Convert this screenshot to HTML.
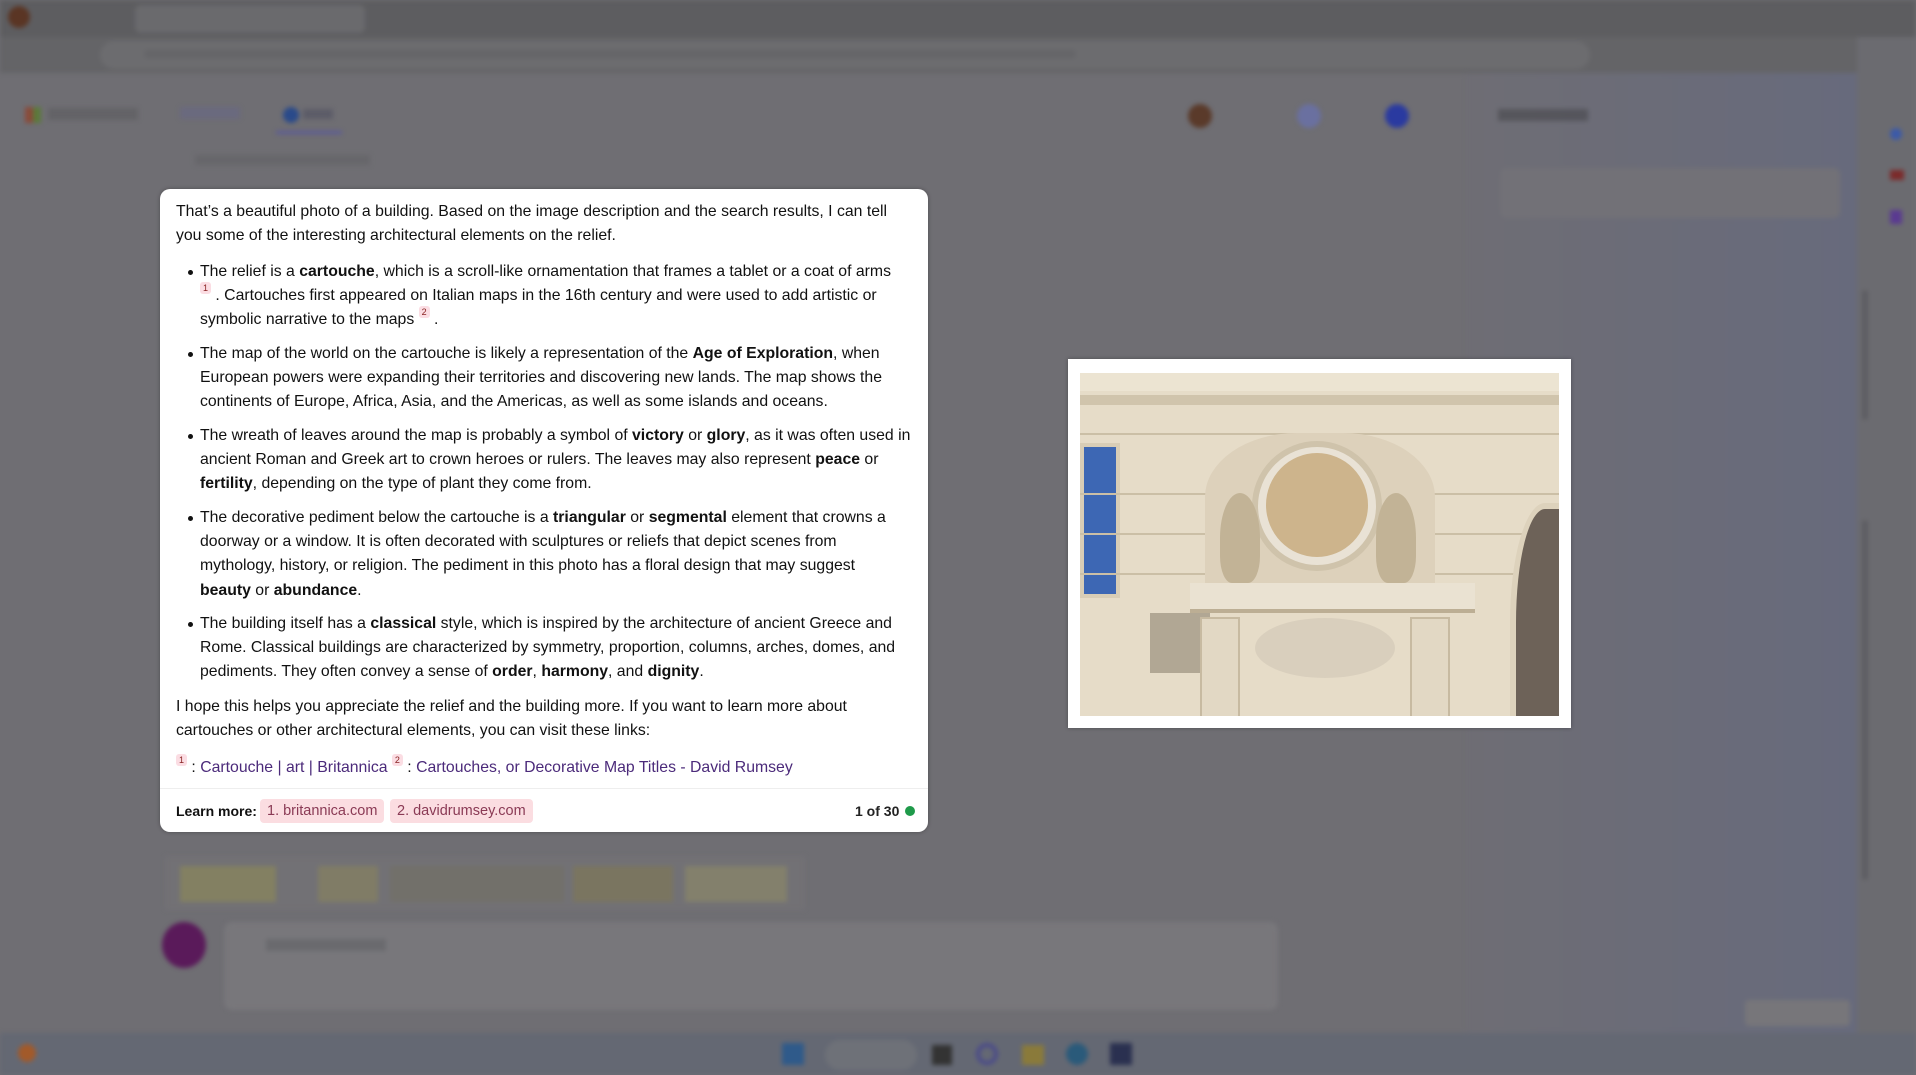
<!DOCTYPE html>
<html><head><meta charset="utf-8"><style>
*{margin:0;padding:0;box-sizing:border-box}
html,body{width:1916px;height:1075px;overflow:hidden;background:#6f6e73;font-family:"Liberation Sans",Arial,sans-serif}
.bg{position:absolute;inset:0;filter:blur(2.5px)}
.abs{position:absolute}
.card{position:absolute;left:160px;top:189px;width:768px;height:643px;background:#fff;border-radius:10px;box-shadow:0 0 4px rgba(0,0,0,.3);color:#111;font-size:15.8px;line-height:24.2px}
.card p{position:absolute;left:16px;white-space:nowrap}
.card .li{left:40px}
.card .dot{position:absolute;left:-12px;top:10px;width:5px;height:5px;border-radius:50%;background:#111}
b{font-weight:bold}
sup{display:inline-block;font-size:9px;line-height:12px;background:#fbdde3;color:#822;padding:0 3px;border-radius:3px;vertical-align:top;margin-top:-2px}
.lnk{color:#4b2a7a}
.pill{position:absolute;top:610px;height:24px;line-height:24px;background:#fbdde1;color:#8a3a55;border-radius:4px;padding:0 7px;font-size:14.5px}
</style></head><body>
<div class="bg">
 <div class="abs" style="left:0;top:0;width:1916px;height:37px;background:#5d5d60"></div>
 <div class="abs" style="left:135px;top:5px;width:230px;height:28px;background:#6a6a6d;border-radius:6px"></div>
 <div class="abs" style="left:8px;top:6px;width:22px;height:22px;border-radius:50%;background:#5a3524"></div>
 <div class="abs" style="left:0;top:37px;width:1916px;height:36px;background:#646467"></div>
 <div class="abs" style="left:100px;top:41px;width:1490px;height:28px;background:#6c6c6f;border-radius:14px"></div>
 <div class="abs" style="left:145px;top:50px;width:930px;height:8px;background:#5e5e62;opacity:.5"></div>
 <div class="abs" style="left:1466px;top:73px;width:391px;height:960px;background:linear-gradient(90deg,#6e6d74,#676a7c)"></div>
 <div class="abs" style="left:1857px;top:37px;width:59px;height:996px;background:#6b6b70"></div>
 <div class="abs" style="left:1890px;top:128px;width:12px;height:12px;border-radius:50%;background:#3c5aa8"></div>
 <div class="abs" style="left:1890px;top:170px;width:14px;height:10px;background:#7b2a2a"></div>
 <div class="abs" style="left:1890px;top:210px;width:12px;height:14px;background:#5a3a90"></div>
 <div class="abs" style="left:1862px;top:290px;width:6px;height:130px;background:#5d5d62;border-radius:3px"></div>
 <div class="abs" style="left:1862px;top:520px;width:6px;height:360px;background:#5d5d62;border-radius:3px"></div>
 <div class="abs" style="left:25px;top:107px;width:16px;height:16px;background:linear-gradient(90deg,#8a4a3a 50%,#5b7a3a 50%)"></div>
 <div class="abs" style="left:48px;top:108px;width:90px;height:12px;background:#5b5b5f;opacity:.6"></div>
 <div class="abs" style="left:180px;top:107px;width:60px;height:12px;background:#66668a;opacity:.5"></div>
 <div class="abs" style="left:283px;top:107px;width:16px;height:16px;border-radius:50%;background:#2a4a8a"></div>
 <div class="abs" style="left:303px;top:109px;width:30px;height:10px;background:#5c5c68"></div>
 <div class="abs" style="left:276px;top:131px;width:66px;height:3px;background:#5a5a9a"></div>
 <div class="abs" style="left:195px;top:155px;width:175px;height:10px;background:#626266;opacity:.6"></div>
 <div class="abs" style="left:1188px;top:104px;width:24px;height:24px;border-radius:50%;background:#5a3a2a"></div>
 <div class="abs" style="left:1297px;top:104px;width:24px;height:24px;border-radius:50%;background:#6a70a0"></div>
 <div class="abs" style="left:1385px;top:104px;width:24px;height:24px;border-radius:50%;background:#2a3aa0"></div>
 <div class="abs" style="left:1498px;top:109px;width:90px;height:12px;background:#505056;opacity:.8"></div>
 <div class="abs" style="left:1500px;top:168px;width:340px;height:50px;background:#727177;border-radius:6px"></div>
 <div class="abs" style="left:165px;top:856px;width:640px;height:54px;background:#727175"></div>
 <div class="abs" style="left:180px;top:866px;width:96px;height:36px;background:#838062"></div>
 <div class="abs" style="left:318px;top:866px;width:60px;height:36px;background:#807c66"></div>
 <div class="abs" style="left:390px;top:866px;width:174px;height:36px;background:#72706a"></div>
 <div class="abs" style="left:573px;top:866px;width:100px;height:36px;background:#7a7560"></div>
 <div class="abs" style="left:685px;top:866px;width:102px;height:36px;background:#83806c"></div>
 <div class="abs" style="left:162px;top:922px;width:44px;height:46px;border-radius:50%;background:#5a1a5a"></div>
 <div class="abs" style="left:224px;top:922px;width:1054px;height:88px;background:#78777b;border-radius:8px"></div>
 <div class="abs" style="left:266px;top:939px;width:120px;height:12px;background:#6a6a6e"></div>
 <div class="abs" style="left:1745px;top:1000px;width:105px;height:26px;background:#77767a;border-radius:4px"></div>
 <div class="abs" style="left:0;top:1033px;width:1916px;height:42px;background:#646873"></div>
 <div class="abs" style="left:18px;top:1044px;width:18px;height:18px;border-radius:50%;background:#a25a2a"></div>
 <div class="abs" style="left:782px;top:1043px;width:22px;height:22px;background:#2f5a8a"></div>
 <div class="abs" style="left:825px;top:1040px;width:92px;height:30px;background:#6e7178;border-radius:15px"></div>
 <div class="abs" style="left:932px;top:1045px;width:20px;height:20px;background:#333"></div>
 <div class="abs" style="left:976px;top:1043px;width:22px;height:22px;border-radius:50%;border:4px solid #4a4a8a"></div>
 <div class="abs" style="left:1022px;top:1045px;width:22px;height:20px;background:#8a7a3a"></div>
 <div class="abs" style="left:1066px;top:1043px;width:22px;height:22px;border-radius:50%;background:#2a5a7a"></div>
 <div class="abs" style="left:1110px;top:1043px;width:22px;height:22px;background:#2a3050"></div>
</div>

<div class="card">
 <p style="top:11px">That’s a beautiful photo of a building. Based on the image description and the search results, I can tell<br>you some of the interesting architectural elements on the relief.</p>
 <p class="li" style="top:71px"><span class="dot"></span>The relief is a <b>cartouche</b>, which is a scroll-like ornamentation that frames a tablet or a coat of arms<br><sup>1</sup> . Cartouches first appeared on Italian maps in the 16th century and were used to add artistic or<br>symbolic narrative to the maps <sup>2</sup> .</p>
 <p class="li" style="top:153px"><span class="dot"></span>The map of the world on the cartouche is likely a representation of the <b>Age of Exploration</b>, when<br>European powers were expanding their territories and discovering new lands. The map shows the<br>continents of Europe, Africa, Asia, and the Americas, as well as some islands and oceans.</p>
 <p class="li" style="top:235px"><span class="dot"></span>The wreath of leaves around the map is probably a symbol of <b>victory</b> or <b>glory</b>, as it was often used in<br>ancient Roman and Greek art to crown heroes or rulers. The leaves may also represent <b>peace</b> or<br><b>fertility</b>, depending on the type of plant they come from.</p>
 <p class="li" style="top:317px"><span class="dot"></span>The decorative pediment below the cartouche is a <b>triangular</b> or <b>segmental</b> element that crowns a<br>doorway or a window. It is often decorated with sculptures or reliefs that depict scenes from<br>mythology, history, or religion. The pediment in this photo has a floral design that may suggest<br><b>beauty</b> or <b>abundance</b>.</p>
 <p class="li" style="top:423px"><span class="dot"></span>The building itself has a <b>classical</b> style, which is inspired by the architecture of ancient Greece and<br>Rome. Classical buildings are characterized by symmetry, proportion, columns, arches, domes, and<br>pediments. They often convey a sense of <b>order</b>, <b>harmony</b>, and <b>dignity</b>.</p>
 <p style="top:506px">I hope this helps you appreciate the relief and the building more. If you want to learn more about<br>cartouches or other architectural elements, you can visit these links:</p>
 <p style="top:567px"><sup>1</sup> : <span class="lnk">Cartouche | art | Britannica</span> <sup>2</sup> : <span class="lnk">Cartouches, or Decorative Map Titles - David Rumsey</span></p>
 <div class="abs" style="left:0;top:599px;width:768px;height:1px;background:#eee"></div>
 <p style="top:610px;font-weight:bold;font-size:14px">Learn more:</p>
 <div class="pill" style="left:100px">1. britannica.com</div>
 <div class="pill" style="left:230px">2. davidrumsey.com</div>
 <p style="top:610px;left:695px;font-size:14px;font-weight:bold;color:#222">1 of 30</p>
 <div class="abs" style="left:745px;top:617px;width:10px;height:10px;border-radius:50%;background:#1f9a4a"></div>
</div>

<div class="abs" style="left:1068px;top:359px;width:503px;height:369px;background:#fff;box-shadow:0 0 4px rgba(0,0,0,.3)">
 <div class="abs" style="left:12px;top:14px;width:479px;height:343px;background:#e6dcc8;overflow:hidden">
  <div class="abs" style="left:0;top:0;width:479px;height:18px;background:#ece4d2"></div>
  <div class="abs" style="left:0;top:22px;width:479px;height:10px;background:#d0c4ac"></div>
  <div class="abs" style="left:0;top:60px;width:479px;height:2px;background:#cbbfa6"></div>
  <div class="abs" style="left:0;top:70px;width:40px;height:155px;background:#3d67b4;border:4px solid #d8cdb6"></div>
  <div class="abs" style="left:0;top:120px;width:479px;height:2px;background:#cbbfa6"></div>
  <div class="abs" style="left:0;top:160px;width:479px;height:2px;background:#cbbfa6"></div>
  <div class="abs" style="left:0;top:200px;width:479px;height:2px;background:#cbbfa6"></div>
  <div class="abs" style="left:125px;top:60px;width:230px;height:160px;background:#ddd1bb;border-radius:40% 40% 0 0"></div>
  <div class="abs" style="left:172px;top:68px;width:130px;height:130px;border-radius:50%;background:#e9e2d5;border:6px solid #cfc3ab"></div>
  <div class="abs" style="left:186px;top:80px;width:102px;height:104px;border-radius:50%;background:#cdb48c"></div>
  <div class="abs" style="left:140px;top:120px;width:40px;height:90px;background:#c2b396;border-radius:50% 50% 30% 30%"></div>
  <div class="abs" style="left:296px;top:120px;width:40px;height:90px;background:#c2b396;border-radius:50% 50% 30% 30%"></div>
  <div class="abs" style="left:110px;top:210px;width:285px;height:30px;background:#eae2d2;border-bottom:4px solid #bcae94"></div>
  <div class="abs" style="left:70px;top:240px;width:60px;height:60px;background:#8e8372;opacity:.6"></div>
  <div class="abs" style="left:120px;top:244px;width:40px;height:110px;background:#e2d8c4;border:2px solid #c7baa1"></div>
  <div class="abs" style="left:330px;top:244px;width:40px;height:110px;background:#e2d8c4;border:2px solid #c7baa1"></div>
  <div class="abs" style="left:175px;top:245px;width:140px;height:60px;background:#d9cfbd;border-radius:50%"></div>
  <div class="abs" style="left:430px;top:130px;width:70px;height:240px;border-radius:50% 0 0 0;background:#6d6258;border:6px solid #ddd2bc"></div>
 </div>
</div>
</body></html>
